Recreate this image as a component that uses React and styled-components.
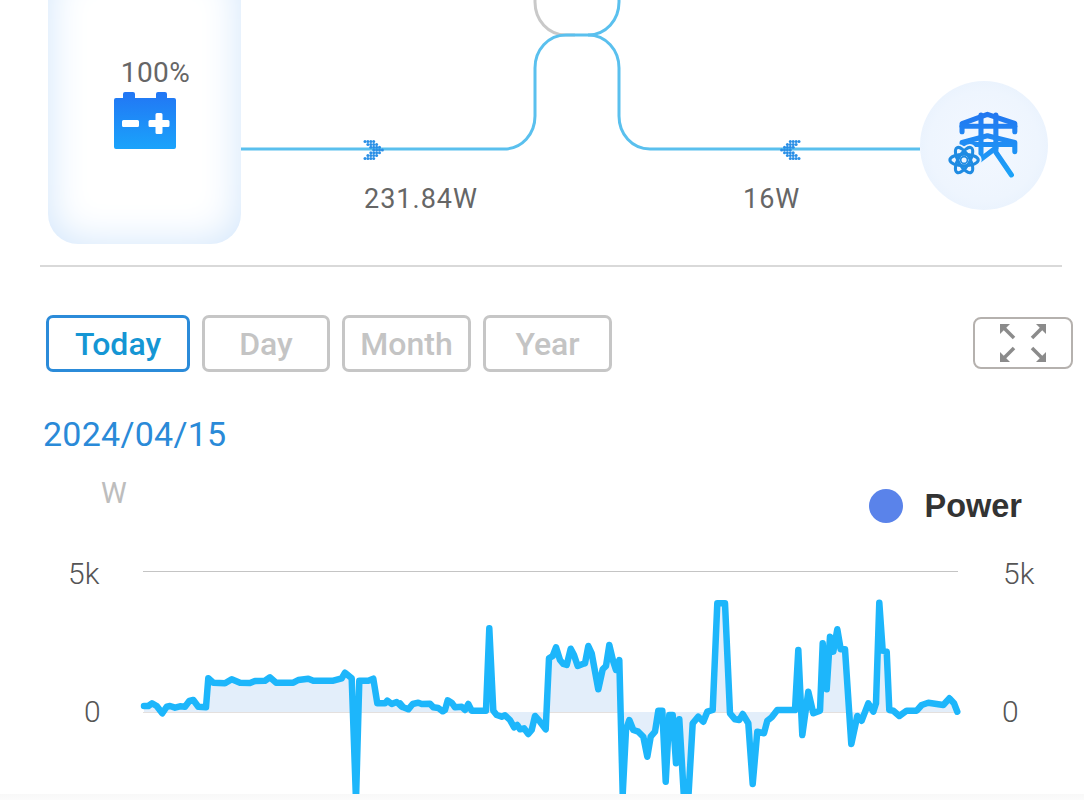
import styled, { createGlobalStyle } from "styled-components";

const GlobalStyle = createGlobalStyle`
  html, body {
    margin: 0;
    padding: 0;
    background: #fff;
    font-family: Roboto, "Liberation Sans", sans-serif;
  }
`;

const Page = styled.div`
  position: relative;
  width: 1084px;
  height: 800px;
  overflow: hidden;
  background: #fff;
`;

const Diagram = styled.div`
  position: relative;
  height: 265px;
  padding: 0 36px 0 48px;
  display: flex;
  justify-content: space-between;
  align-items: flex-start;
  box-sizing: border-box;
`;

const Wires = styled.svg`
  position: absolute;
  top: 0;
  left: 0;
`;

const BatteryCard = styled.div`
  position: relative;
  width: 193px;
  height: 284px;
  margin-top: -40px;
  padding-top: 95px;
  box-sizing: border-box;
  border-radius: 30px;
  background: #fff;
  box-shadow: inset 0 0 40px #cfe4fb;
  display: flex;
  flex-direction: column;
  align-items: center;
`;

const Percent = styled.div`
  margin: 0 0 1px 22px;
  font-size: 28px;
  font-weight: 400;
  line-height: 36px;
  letter-spacing: 0.5px;
  color: #666;
`;

const GridNode = styled.div`
  position: relative;
  width: 128px;
  height: 129px;
  margin-top: 81px;
  border-radius: 50%;
  background: radial-gradient(circle, #f3f8ff 0%, #eef5fe 60%, #e2eefc 100%);
  display: flex;
  align-items: center;
  justify-content: center;
`;

const FlowLabel = styled.div`
  position: absolute;
  top: 182px;
  left: ${(p) => p.$x}px;
  font-size: 27px;
  font-weight: 400;
  line-height: 34px;
  letter-spacing: 1px;
  color: #666;
`;

const FlowArrowWrap = styled.svg`
  position: absolute;
  top: 139px;
  left: ${(p) => p.$x}px;
`;

const Divider = styled.div`
  height: 2px;
  margin: 0 22px 0 40px;
  background: #d9d9d9;
`;

const Toolbar = styled.div`
  display: flex;
  align-items: flex-start;
  gap: 12px;
  margin-top: 48px;
  padding: 0 11px 0 46px;
`;

const RangeButton = styled.div`
  width: ${(p) => p.$w}px;
  height: 57px;
  box-sizing: border-box;
  border: 3px solid ${(p) => (p.$active ? "#2b8bd9" : "#c6c6c6")};
  border-radius: 7px;
  display: flex;
  align-items: center;
  justify-content: center;
  font-size: 32px;
  font-weight: 500;
  color: ${(p) => (p.$active ? "#1596d4" : "#c4c4c4")};
`;

const ExpandButton = styled.div`
  width: 100px;
  height: 52px;
  margin: 2px 0 0 auto;
  box-sizing: border-box;
  border: 2px solid #b5b1ae;
  border-radius: 8px;
  display: flex;
  align-items: center;
  justify-content: center;
`;

const DateLabel = styled.div`
  margin: 42px 0 0 43px;
  font-size: 34px;
  line-height: 40px;
  letter-spacing: 0.25px;
  color: #2a8ad8;
`;

const ChartHead = styled.div`
  display: flex;
  justify-content: space-between;
  height: 86px;
  padding: 0 62px 0 101px;
`;

const Unit = styled.div`
  margin-top: 22px;
  font-size: 29px;
  font-weight: 400;
  line-height: 34px;
  color: #bdbdbd;
`;

const Legend = styled.div`
  display: flex;
  align-items: center;
  gap: 21px;
  height: 36px;
  margin-top: 34px;
`;

const LegendDot = styled.span`
  width: 34px;
  height: 34px;
  border-radius: 50%;
  background: #5a83ea;
`;

const LegendText = styled.span`
  font-family: "Liberation Sans", Arial, sans-serif;
  font-size: 32.5px;
  font-weight: 700;
  color: #333;
`;

const ChartSvg = styled.svg`
  display: block;
`;

const AxisText = styled.text`
  font-family: Roboto, "Liberation Sans", sans-serif;
  font-size: 30px;
  font-weight: 300;
  fill: #555;
`;

const BottomFade = styled.div`
  position: absolute;
  left: 0;
  right: 0;
  bottom: 0;
  height: 6px;
  background: linear-gradient(#f8f8f8, #fbfbfb);
`;

// traced from the chart, in 3x crop coords, one list per crop
const seg1 = [[42,348],[55,348],[66,340],[80,348],[97,370],[110,350],[120,348],[135,353],[150,349],[165,350],[178,333],[190,330],[205,350],[228,352],[235,265],[250,278],[285,280],[305,268],[330,278],[360,279],[375,273],[405,272],[420,262],[438,278],[490,278],[505,270],[535,266],[550,272],[610,272],[635,265],[645,248],[665,265],[678,630],[688,272],[715,272],[730,266],[742,340],[765,340],[772,332],[785,342],[800,336],[815,350]];
const seg2 = [[0,340],[10,352],[25,358],[38,342],[55,338],[65,342],[90,341],[100,352],[115,354],[128,364],[135,360],[143,331],[155,338],[165,352],[185,350],[195,360],[205,342],[215,362],[258,362],[268,115],[280,362],[290,375],[305,380],[315,376],[330,390],[342,412],[352,405],[360,418],[372,415],[385,432],[395,420],[405,378],[420,395],[437,418],[447,205],[458,198],[468,172],[480,210],[490,222],[500,225],[512,176],[522,195],[533,228],[548,222],[555,220],[565,168],[575,190],[595,298],[608,238],[618,228],[628,165],[640,215],[648,240],[658,210],[668,612],[678,420],[688,390],[700,420],[715,425],[730,440],[742,500],[752,440],[765,425],[775,362],[787,362],[797,575],[808,375],[818,375],[828,520]];
const seg3 = [[-2,388],[12,625],[25,625],[38,400],[55,380],[70,395],[82,365],[98,360],[112,40],[135,40],[150,370],[165,388],[178,390],[188,372],[205,400],[218,582],[232,425],[252,430],[262,392],[275,382],[292,360],[345,360],[355,180],[367,435],[385,305],[400,370],[420,362],[428,160],[440,298],[450,140],[460,185],[472,118],[482,178],[495,178],[514,462],[532,378],[545,392],[565,340],[580,365],[588,340],[598,38],[608,182],[620,185],[628,360],[640,362],[658,378],[680,362],[710,362],[725,345],[745,338],[790,345],[808,325],[822,340],[832,365]];

const toPage = (pts, ox) => pts.map(([x, y]) => [ox + x / 3, 590 + y / 3]);
const power = [...toPage(seg1, 130), ...toPage(seg2, 400), ...toPage(seg3, 680)];
const linePts = power.map(([x, y]) => `${x.toFixed(1)},${y.toFixed(1)}`).join(" ");
const areaPts = `${power[0][0]},712 ${linePts} ${power[power.length - 1][0].toFixed(1)},712`;

const FlowArrow = ({ x, flip }) => {
  const dots = [];
  for (let r = -3; r <= 3; r++) {
    const start = 3 - Math.abs(r);
    for (let c = 0; c < 4; c++) {
      dots.push(<circle key={`${r}-${c}`} cx={2 + (start + c) * 2.9} cy={11 + r * 2.8} r={1.5} />);
    }
  }
  return (
    <FlowArrowWrap $x={x} width="21" height="22" viewBox="0 0 21 22" fill="#2a8fe6">
      <g transform={flip ? "translate(21 0) scale(-1 1)" : undefined}>{dots}</g>
    </FlowArrowWrap>
  );
};

const BatteryIcon = () => (
  <svg width="62" height="57" viewBox="113 93 62 57">
    <defs>
      <linearGradient id="battGrad" x1="0" y1="0" x2="0" y2="1">
        <stop offset="0" stopColor="#2276f4" />
        <stop offset="1" stopColor="#1aa3fb" />
      </linearGradient>
    </defs>
    <path
      fill="url(#battGrad)"
      fillRule="evenodd"
      d="M125 93h7a2 2 0 0 1 2 2v4h21v-4a2 2 0 0 1 2-2h7a2 2 0 0 1 2 2v4h7a2 2 0 0 1 2 2v47a2 2 0 0 1-2 2h-58a2 2 0 0 1-2-2v-47a2 2 0 0 1 2-2h7v-4a2 2 0 0 1 2-2zM122.500 121a1.500 1.500 0 0 0-1.500 1.500v4a1.500 1.500 0 0 0 1.500 1.500h14a1.500 1.500 0 0 0 1.500-1.500v-4a1.500 1.500 0 0 0-1.500-1.500zM156 114a1.500 1.500 0 0 0-1.500 1.500v5.500h-5.500a1.500 1.500 0 0 0-1.500 1.500v4a1.500 1.500 0 0 0 1.500 1.500h5.500v5.500a1.500 1.500 0 0 0 1.500 1.500h4a1.500 1.500 0 0 0 1.500-1.500v-5.500h5.500a1.500 1.500 0 0 0 1.500-1.500v-4a1.500 1.500 0 0 0-1.500-1.500h-5.500v-5.500a1.500 1.500 0 0 0-1.500-1.500z"
    />
  </svg>
);

const TowerWrap = styled.svg`
  margin: 0 5px 3px 0;
`;

const TowerIcon = () => (
  <TowerWrap width="72" height="69" viewBox="135 120 212 204" fill="none">
    <defs>
      <linearGradient id="towerGrad" gradientUnits="userSpaceOnUse" x1="0" y1="125" x2="0" y2="320">
        <stop offset="0" stopColor="#2276f0" />
        <stop offset="1" stopColor="#1ca4f8" />
      </linearGradient>
    </defs>
    <g stroke="url(#towerGrad)" strokeWidth="15" strokeLinejoin="round" strokeLinecap="round">
      <path d="M182 184V160L257 133L338 160V184" />
      <path d="M182 168H338" />
      <path d="M182 236V216L257 196L338 216V243" />
      <path d="M190 222H335" />
      <path d="M238 135V250" />
      <path d="M282 135V245L328 312" />
      <path d="M282 232L232 270" />
    </g>
    <g stroke="#eef5fe" strokeWidth="20" transform="translate(188 268)">
      <ellipse rx="42" ry="17" />
      <ellipse rx="42" ry="17" transform="rotate(60)" />
      <ellipse rx="42" ry="17" transform="rotate(120)" />
    </g>
    <g stroke="#1f8be2" strokeWidth="9" transform="translate(188 268)">
      <ellipse rx="42" ry="17" />
      <ellipse rx="42" ry="17" transform="rotate(60)" />
      <ellipse rx="42" ry="17" transform="rotate(120)" />
      <circle r="10" fill="#eef5fe" stroke="#1f8be2" strokeWidth="5" />
    </g>
  </TowerWrap>
);

const ExpandIcon = () => (
  <svg width="48" height="40" viewBox="0 0 48 40" fill="#8b8b8b" stroke="#8b8b8b">
    <g strokeWidth="3.500">
      <path d="M5 5L15 15" />
      <path d="M43 5L33 15" />
      <path d="M5 35L15 25" />
      <path d="M43 35L33 25" />
    </g>
    <g stroke="none">
      <path d="M1 1H11L1 11Z" />
      <path d="M47 1H37L47 11Z" />
      <path d="M1 39H11L1 29Z" />
      <path d="M47 39H37L47 29Z" />
    </g>
  </svg>
);

const RANGES = [
  { label: "Today", w: 144, active: true },
  { label: "Day", w: 128 },
  { label: "Month", w: 129 },
  { label: "Year", w: 129 },
];

export default function App() {
  return (
    <Page>
      <GlobalStyle />
      <Diagram>
        <Wires width="1084" height="265" fill="none" strokeWidth="3">
          <path stroke="#c9c9c9" d="M535 0V2C535 20 548 35 566 35H575" />
          <path
            stroke="#5ac0ee"
            d="M619 0V2C619 20 606 35 588 35H566C548 35 535 50 535 68V116C535 134 522 149 504 149H241"
          />
          <path stroke="#5ac0ee" d="M588 35C606 35 619 50 619 68V116C619 134 632 149 650 149H920" />
        </Wires>
        <BatteryCard>
          <Percent>100%</Percent>
          <BatteryIcon />
        </BatteryCard>
        <GridNode>
          <TowerIcon />
        </GridNode>
        <FlowArrow x={363} />
        <FlowArrow x={780} flip />
        <FlowLabel $x={364}>231.84W</FlowLabel>
        <FlowLabel $x={743}>16W</FlowLabel>
      </Diagram>
      <Divider />
      <Toolbar>
        {RANGES.map((r) => (
          <RangeButton key={r.label} $w={r.w} $active={r.active}>
            {r.label}
          </RangeButton>
        ))}
        <ExpandButton>
          <ExpandIcon />
        </ExpandButton>
      </Toolbar>
      <DateLabel>2024/04/15</DateLabel>
      <ChartHead>
        <Unit>W</Unit>
        <Legend>
          <LegendDot />
          <LegendText>Power</LegendText>
        </Legend>
      </ChartHead>
      <ChartSvg width="1084" height="255" viewBox="0 540 1084 255">
        <line x1="143" y1="571.500" x2="958" y2="571.500" stroke="#c4c4c4" strokeWidth="1" />
        <line x1="143" y1="712.500" x2="958" y2="712.500" stroke="#e4e0de" strokeWidth="1" />
        <polygon points={areaPts} fill="#e3eefa" />
        <polyline
          points={linePts}
          fill="none"
          stroke="#1db6fb"
          strokeWidth="6.500"
          strokeLinejoin="round"
          strokeLinecap="round"
        />
        <AxisText x="68" y="584">5k</AxisText>
        <AxisText x="84" y="722">0</AxisText>
        <AxisText x="1003" y="584">5k</AxisText>
        <AxisText x="1002" y="722">0</AxisText>
      </ChartSvg>
      <BottomFade />
    </Page>
  );
}
